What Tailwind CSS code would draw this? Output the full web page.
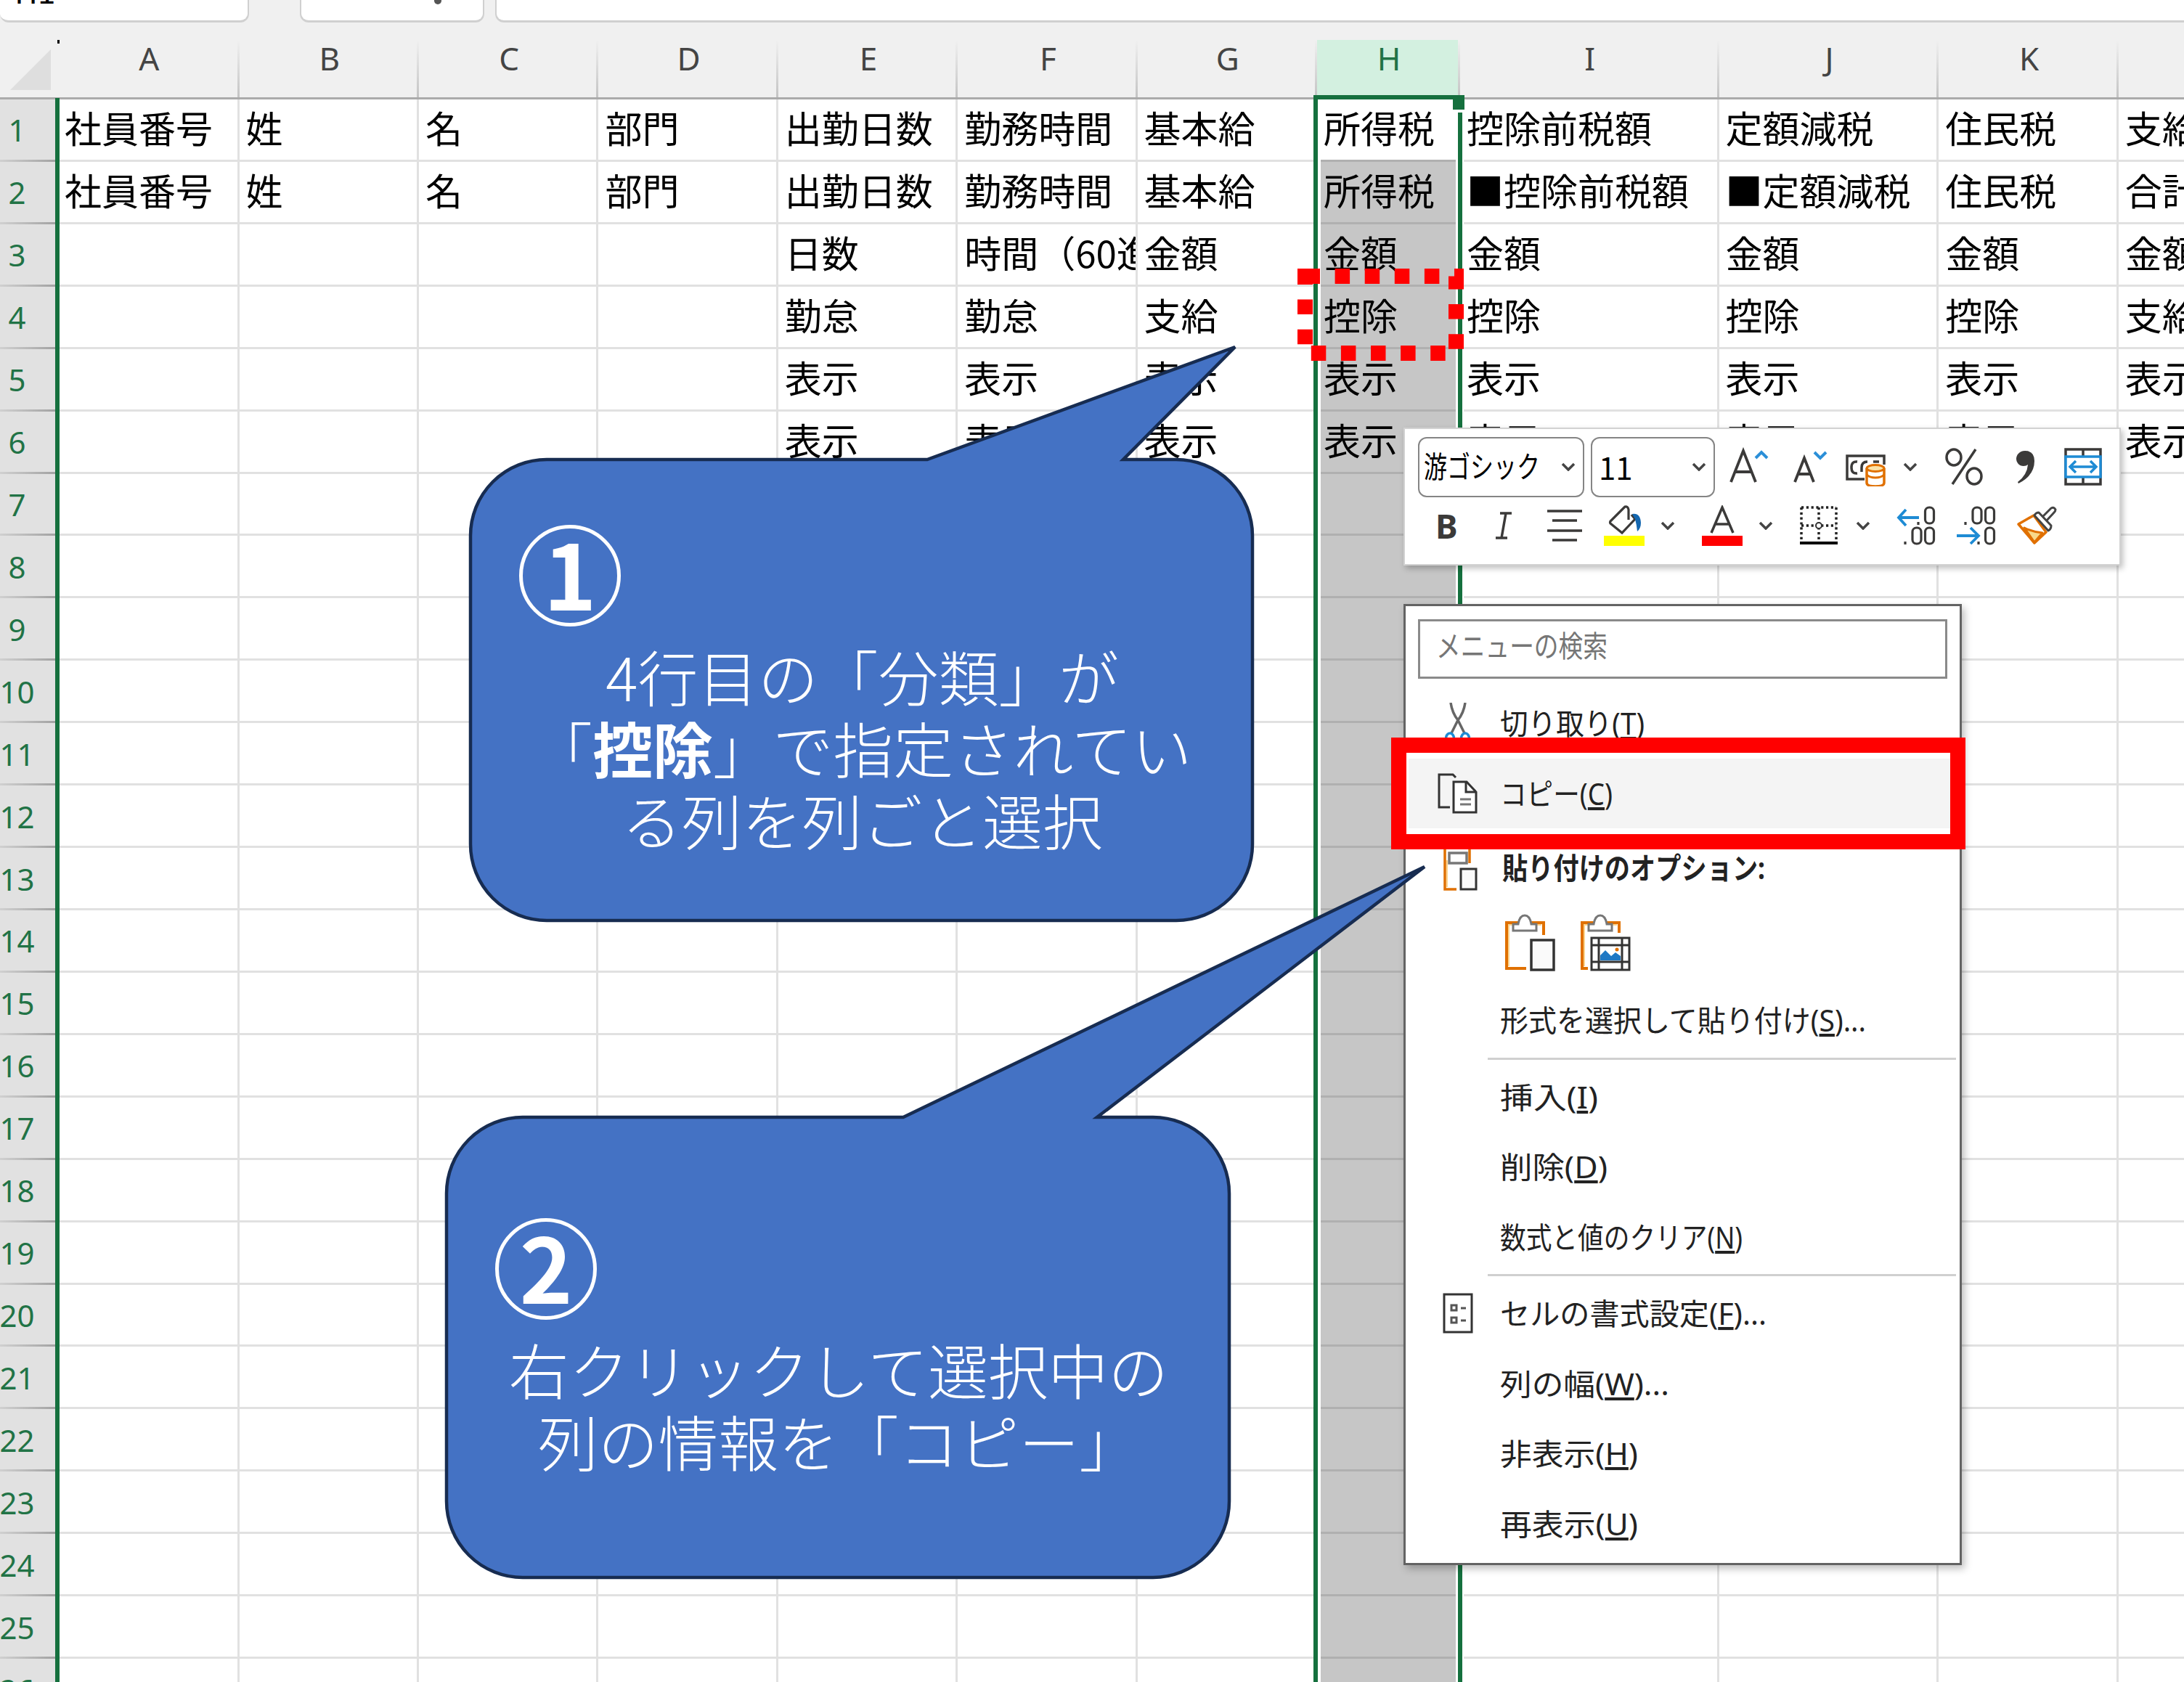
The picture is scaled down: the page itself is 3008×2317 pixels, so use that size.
<!DOCTYPE html>
<html lang="ja">
<head>
    <meta charset="UTF-8">
    <meta name="viewport" content="width=device-width, initial-scale=1.0">
    <title>列のコピー手順</title>
    <script src="https://cdn.jsdelivr.net/npm/@tailwindcss/browser@4"></script>
</head>
<body class="relative w-[3008px] h-[2317px] overflow-hidden bg-white text-black font-['Noto_Sans_CJK_JP',sans-serif]">

<!-- formula bar -->
<div class="flex h-[55px] items-start bg-[#f0f0f0]">
    <div class="w-[343px] h-[31px] bg-white border-r-2 border-b-3 border-[#d0d0d0] rounded-b-xl overflow-hidden">
        <div class="-mt-[41px] pl-[20px] text-[44px] leading-[54px]">H1</div>
    </div>
    <div class="ml-[70px] w-[254px] h-[31px] bg-white border-x-2 border-b-3 border-[#d0d0d0] rounded-b-xl overflow-hidden">
        <div class="ml-[183px] w-[10px] h-[6px] bg-[#555] rounded-b-full"></div>
    </div>
    <div class="ml-[15px] grow h-[31px] bg-white border-l-2 border-b-3 border-[#d0d0d0] rounded-bl-xl"></div>
</div>

<!-- column letters -->
<div id="columns" class="flex h-[82px] overflow-hidden bg-[#f0f0f0] border-b-3 border-[#ababab] font-['Noto_Sans',sans-serif] text-[44px] text-[#444]">
    <div class="flex w-[80px] shrink-0 pl-[14px] pt-[13px]">
        <svg width="56" height="56" viewBox="0 0 56 56"><path d="M56 0V56H0z" fill="#dedede"/></svg>
    </div>
</div>

<!-- rows -->
<div id="rows" class="overflow-hidden"></div>

<!-- selection frame -->
<div class="absolute left-[79px] top-[55px] w-[3px] h-[5px] bg-black"></div>
<div class="absolute left-[76px] top-[135px] w-[6px] bottom-0 bg-[#15703e]"></div>
<div class="absolute left-[1809px] top-[131px] w-[208px] h-[6px] bg-[#15703e]"></div>
<div class="absolute left-[1809px] top-[131px] w-[6px] bottom-0 bg-[#15703e]"></div>
<div class="absolute left-[1815px] top-[137px] w-[4px] bottom-0 bg-white"></div>
<div class="absolute left-[2005px] top-[137px] w-[11px] bottom-0 bg-white"></div>
<div class="absolute left-[2008px] top-[155px] w-[6px] bottom-0 bg-[#15703e]"></div>
<div class="absolute left-[2001px] top-[131px] w-[16px] h-[20px] bg-[#15703e]"></div>

<!-- mini toolbar -->
<div class="absolute left-[1933px] top-[589px] w-[988px] h-[190px] bg-white border-2 border-[#d2d2d2] shadow-[3px_4px_8px_rgba(0,0,0,0.25)] text-[#3b3a39]">
    <div class="flex items-center mt-[10px] ml-[18px] h-[84px]">
        <div class="flex items-center justify-between w-[229px] h-[83px] pl-[6px] pr-[10px] border-[2.5px] border-[#858585] rounded-xl">
            <svg class="overflow-visible" width="160" height="40" font-size="41" fill="#000"><text y="35" textLength="160" lengthAdjust="spacingAndGlyphs">游ゴシック</text></svg>
            <svg width="20" height="12" viewBox="0 0 20 12"><path d="M2 2l8 8 8-8" fill="none" stroke="#444" stroke-width="3.5"/></svg>
        </div>
        <div class="flex items-center justify-between ml-[9px] w-[171px] h-[83px] pl-[9px] pr-[10px] border-[2.5px] border-[#858585] rounded-xl">
            <span class="text-[42px] leading-none text-black">11</span>
            <svg width="20" height="12" viewBox="0 0 20 12"><path d="M2 2l8 8 8-8" fill="none" stroke="#444" stroke-width="3.5"/></svg>
        </div>
        <svg class="ml-[20px]" width="56" height="54" viewBox="0 0 56 54"><path d="M2 48L19 5l17 43M8 34h22" fill="none" stroke="#3b3a39" stroke-width="3.8"/><path d="M36 15l8-8 8 8" fill="none" stroke="#2b8fd8" stroke-width="4"/></svg>
        <svg class="ml-[32px]" width="52" height="54" viewBox="0 0 52 54"><path d="M2 48L15 15l13 33M7 37h17" fill="none" stroke="#3b3a39" stroke-width="3.8"/><path d="M29 7l8 8 8-8" fill="none" stroke="#2b8fd8" stroke-width="4"/></svg>
        <svg class="ml-[19px]" width="60" height="54" viewBox="0 0 60 54">
            <path d="M27 44H3V12h51v12" fill="none" stroke="#3b3a39" stroke-width="3.5"/>
            <path d="M17 20q-8-1-8 8t8 8M31 20q-8 0-8 8v6M39 20h8" fill="none" stroke="#3b3a39" stroke-width="3.5"/>
            <path d="M30 30v20q0 5 12 5t12-5V30" fill="#fff" stroke="#e07000" stroke-width="3.5" transform="translate(0 -1)"/>
            <ellipse cx="42" cy="29" rx="12" ry="4.5" fill="#fbe3a8" stroke="#e07000" stroke-width="3"/>
            <path d="M30 38q4 4 12 4t12-4" fill="none" stroke="#e07000" stroke-width="3"/>
        </svg>
        <svg class="ml-[20px]" width="20" height="12" viewBox="0 0 20 12"><path d="M2 2l8 8 8-8" fill="none" stroke="#444" stroke-width="3.5"/></svg>
        <svg class="ml-[37px]" width="54" height="54" viewBox="0 0 54 54" fill="none" stroke="#3b3a39" stroke-width="3.5"><path d="M43 3L11 51"/><ellipse cx="13" cy="14" rx="10" ry="11"/><ellipse cx="41" cy="40" rx="10" ry="11"/></svg>
        <svg class="ml-[44px]" width="28" height="54" viewBox="0 0 28 54"><path d="M13 5C5 5 1 11 1 16s4 10 10 10q4 0 6-2Q16 38 3 48l1 2Q26 39 26 19 26 5 13 5z" fill="#3b3a39"/></svg>
        <svg class="ml-[38px]" width="54" height="54" viewBox="0 0 54 54" fill="none" stroke-width="3.5"><path d="M3 3h48v48H3zM27 3v48" stroke="#3b3a39"/><path d="M3 13h48v28H3z" fill="#fff" stroke="#1e8bd4"/><path d="M10 27h34M17 19l-8 8 8 8M37 19l8 8-8 8" stroke="#1e8bd4"/></svg>
    </div>
    <div class="flex items-center mt-[11px] ml-[42px] h-[56px]">
        <span class="w-[30px] text-[46px] leading-[56px] font-bold font-['Noto_Sans',sans-serif]">B</span>
        <svg class="ml-[52px]" width="26" height="38" viewBox="0 0 26 38"><path d="M7 2h16M1 36h16M15 2L9 36" fill="none" stroke="#3b3a39" stroke-width="3.5"/></svg>
        <svg class="ml-[46px]" width="48" height="46" viewBox="0 0 48 46"><path d="M0 3h48M7 16h34M0 30h48M7 43h34" stroke="#3b3a39" stroke-width="3.5"/></svg>
        <svg class="ml-[30px]" width="56" height="56" viewBox="0 0 56 56"><path d="M34 20V6q-1-5-5-4l-3 3L9 22q-1 2 0 3l16 13L43 19l-5-6" fill="none" stroke="#3b3a39" stroke-width="3.2"/><path d="M39 12q11-2 12 12 0 8-5 12-1-10-3-17z" fill="#1467b0"/><path d="M0 42h56v14H0z" fill="#ff0"/></svg>
        <svg class="ml-[22px]" width="20" height="12" viewBox="0 0 20 12"><path d="M2 2l8 8 8-8" fill="none" stroke="#444" stroke-width="3.5"/></svg>
        <svg class="ml-[37px]" width="56" height="56" viewBox="0 0 56 56"><path d="M13 38L28 3l15 35M18 26h20" fill="none" stroke="#3b3a39" stroke-width="3.5"/><path d="M0 42h56v14H0z" fill="red"/></svg>
        <svg class="ml-[22px]" width="20" height="12" viewBox="0 0 20 12"><path d="M2 2l8 8 8-8" fill="none" stroke="#444" stroke-width="3.5"/></svg>
        <svg class="ml-[37px]" width="52" height="54" viewBox="0 0 52 54"><path d="M2 2h48M2 2v44M50 2v44M26 2v44M2 27h48" fill="none" stroke="#222" stroke-width="3.5" stroke-dasharray="3.2 3.6"/><path d="M0 51h52" stroke="#000" stroke-width="4"/><circle cx="26" cy="27" r="4" fill="#fff" stroke="#333" stroke-width="2"/></svg>
        <svg class="ml-[25px]" width="20" height="12" viewBox="0 0 20 12"><path d="M2 2l8 8 8-8" fill="none" stroke="#444" stroke-width="3.5"/></svg>
        <svg class="ml-[36px]" width="54" height="54" viewBox="0 0 54 54" fill="none" stroke="#3b3a39" stroke-width="3.2"><rect x="39.5" y="2" width="12" height="22" rx="5.5"/><rect x="22" y="30" width="12" height="22" rx="5.5"/><rect x="39.5" y="30" width="12" height="22" rx="5.5"/><path d="M30 22v4M12 49v4"/><path d="M31 16H3M13 5L3 16l10 11" stroke="#1e8bd4" stroke-width="3.8"/></svg>
        <svg class="ml-[29px]" width="54" height="54" viewBox="0 0 54 54" fill="none" stroke="#3b3a39" stroke-width="3.2"><rect x="22" y="2" width="12" height="22" rx="5.5"/><rect x="39.5" y="2" width="12" height="22" rx="5.5"/><rect x="39.5" y="30" width="12" height="22" rx="5.5"/><path d="M12 22v4M30 49v4"/><path d="M0 41h29M19 30l11 11-11 11" stroke="#1e8bd4" stroke-width="3.8"/></svg>
        <svg class="ml-[29px]" width="56" height="54" viewBox="0 0 56 54" stroke-linejoin="round"><path d="M2 25L23 13 40 36 24 51z" fill="#fff" stroke="#e07000" stroke-width="3.5"/><path d="M10 30q12 6 25 7L24 50z" fill="#f8d98a" stroke="#e07000" stroke-width="3"/><path d="M35 15L47 3q4-2 6 2 0 2-2 4L39 22z" fill="#fff" stroke="#444" stroke-width="3"/><path d="M24 13q2-4 6-4L47 27q0 5-4 7z" fill="#fff" stroke="#444" stroke-width="3"/></svg>
    </div>
</div>

<!-- context menu -->
<div class="absolute left-[1933px] top-[832px] w-[769px] h-[1324px] bg-white border-3 border-[#636363] shadow-[4px_5px_10px_rgba(0,0,0,0.25)] text-[41px] text-[#222] font-['Noto_Sans','Noto_Sans_CJK_JP',sans-serif]">
    <div class="flex items-center mt-[18px] mx-[17px] h-[82px] pl-[22px] pb-[10px] border-3 border-[#8a8a8a] text-[#767676]">
        <svg class="overflow-visible" width="236" height="40" fill="currentColor"><text y="36" textLength="236" lengthAdjust="spacingAndGlyphs">メニューの検索</text></svg>
    </div>
    <div class="flex items-center mt-[13px] h-[96.5px]">
        <div class="w-[130px] pl-[54px]">
            <svg width="36" height="56" viewBox="0 0 36 56" fill="none" stroke-width="3.5"><path d="M8 0q2 14 10 24l9 18M28 0q-2 14-10 24L9 42" stroke="#666"/><ellipse cx="7" cy="49" rx="5.5" ry="7" stroke="#1e8bd4"/><ellipse cx="28" cy="49" rx="5.5" ry="7" stroke="#1e8bd4"/></svg>
        </div>
        <svg class="overflow-visible" width="199" height="40" fill="currentColor"><text y="36" textLength="199" lengthAdjust="spacingAndGlyphs">切り取り(<tspan class="underline">T</tspan>)</text></svg>
    </div>
    <div class="flex items-center h-[96.5px] mx-[4px] bg-[#f4f4f4]">
        <div class="w-[126px] pl-[40px]">
            <svg width="56" height="56" viewBox="0 0 56 56" fill="none" stroke="#333" stroke-width="3"><path d="M17 47H2V2h19l4 4"/><path d="M22 12h18l13 14v28H22z" fill="#fff"/><path d="M39 12v14h14"/><path d="M31 36h15M31 43h15" stroke="#777"/></svg>
        </div>
        <svg class="overflow-visible" width="155" height="40" fill="currentColor"><text y="36" textLength="155" lengthAdjust="spacingAndGlyphs">コピー(<tspan class="underline">C</tspan>)</text></svg>
    </div>
    <div class="flex items-center h-[106px]">
        <div class="w-[133px] pl-[50px]">
            <svg width="50" height="78" viewBox="0 0 50 78" fill="none" stroke-width="3.5"><path d="M20 70H4V10h34v24" stroke="#e07000"/><path d="M7 67V30" stroke="#fbd48f" stroke-width="2"/><path d="M10 20h24v14H10z" fill="#fff" stroke="#777"/><path d="M26 42h21v28H26z" fill="#fafafa" stroke="#333" stroke-width="3"/></svg>
        </div>
        <svg class="overflow-visible" width="362" height="40" fill="currentColor" font-weight="bold"><text y="37" textLength="362" lengthAdjust="spacingAndGlyphs">貼り付けのオプション:</text></svg>
    </div>
    <div class="flex gap-[32px] h-[110px] pl-[135px] pt-[11px]">
        <svg width="72" height="82" viewBox="0 0 72 82" fill="none" stroke-width="4"><path d="M31 76H4V13h51v17" stroke="#e07000"/><path d="M7 73V16h45" stroke="#fbd48f" stroke-width="2"/><path d="M13 24V15h7q2-12 9-12t9 12h7v9z" fill="#fff" stroke="#777" stroke-width="3"/><path d="M38 37h31v41H38z" fill="#fafafa" stroke="#333" stroke-width="3.5"/></svg>
        <svg width="72" height="82" viewBox="0 0 72 82" fill="none" stroke-width="4"><path d="M12 76H4V13h51v14" stroke="#e07000"/><path d="M7 73V16h45" stroke="#fbd48f" stroke-width="2"/><path d="M13 24V15h7q2-12 9-12t9 12h7v9z" fill="#fff" stroke="#777" stroke-width="3"/><path d="M17 34h52v44H17zM27 34v44M59 34v44M17 44h52M17 67h52" fill="#fff" stroke="#333" stroke-width="3"/><path d="M29 65V58l7-7 8 8 6-5 7 5v6z" fill="#1e78c4"/><circle cx="52" cy="50" r="2.5" fill="#e07000"/></svg>
    </div>
    <div class="flex items-center h-[96.5px] pl-[130px]"><svg class="overflow-visible" width="504" height="40" fill="currentColor"><text y="36" textLength="504" lengthAdjust="spacingAndGlyphs">形式を選択して貼り付け(<tspan class="underline">S</tspan>)...</text></svg></div>
    <div class="h-[3px] my-[3px] ml-[113px] mr-[5px] bg-[#d0d0d0]"></div>
    <div class="flex items-center h-[96.5px] pl-[130px]"><svg class="overflow-visible" width="135" height="40" fill="currentColor"><text y="36" textLength="135" lengthAdjust="spacingAndGlyphs">挿入(<tspan class="underline">I</tspan>)</text></svg></div>
    <div class="flex items-center h-[96.5px] pl-[130px]"><svg class="overflow-visible" width="148" height="40" fill="currentColor"><text y="36" textLength="148" lengthAdjust="spacingAndGlyphs">削除(<tspan class="underline">D</tspan>)</text></svg></div>
    <div class="flex items-center h-[96.5px] pl-[130px]"><svg class="overflow-visible" width="334" height="40" fill="currentColor"><text y="36" textLength="334" lengthAdjust="spacingAndGlyphs">数式と値のクリア(<tspan class="underline">N</tspan>)</text></svg></div>
    <div class="h-[3px] my-[3px] ml-[113px] mr-[5px] bg-[#d0d0d0]"></div>
    <div class="flex items-center h-[96.5px]">
        <div class="w-[130px] pl-[51px]">
            <svg width="42" height="56" viewBox="0 0 42 56" fill="none" stroke="#333" stroke-width="3"><path d="M2 2h38v52H2z"/><path d="M12 17h7v7h-7zM12 34h7v7h-7zM25 21h7M25 38h7" stroke="#555"/></svg>
        </div>
        <svg class="overflow-visible" width="367" height="40" fill="currentColor"><text y="36" textLength="367" lengthAdjust="spacingAndGlyphs">セルの書式設定(<tspan class="underline">F</tspan>)...</text></svg>
    </div>
    <div class="flex items-center h-[96.5px] pl-[130px]"><svg class="overflow-visible" width="233" height="40" fill="currentColor"><text y="36" textLength="233" lengthAdjust="spacingAndGlyphs">列の幅(<tspan class="underline">W</tspan>)...</text></svg></div>
    <div class="flex items-center h-[96.5px] pl-[130px]"><svg class="overflow-visible" width="190" height="40" fill="currentColor"><text y="36" textLength="190" lengthAdjust="spacingAndGlyphs">非表示(<tspan class="underline">H</tspan>)</text></svg></div>
    <div class="flex items-center h-[96.5px] pl-[130px]"><svg class="overflow-visible" width="190" height="40" fill="currentColor"><text y="36" textLength="190" lengthAdjust="spacingAndGlyphs">再表示(<tspan class="underline">U</tspan>)</text></svg></div>
</div>

<!-- red markers and callout shapes -->
<svg class="absolute left-0 top-0" width="3008" height="2317" viewBox="0 0 3008 2317" fill="none">
    <path d="M1797.5 380.5H2005.5V486.5H1797.5z" stroke="red" stroke-width="21" stroke-dasharray="20.5 20.6"/>
    <path d="M753 633H1277L1701 478 1547 633H1620A105 105 0 0 1 1725 738V1163A105 105 0 0 1 1620 1268H753A105 105 0 0 1 648 1163V738A105 105 0 0 1 753 633z" fill="#4472c4" stroke="#172c51" stroke-width="4.5"/>
    <path d="M720 1539H1244L1962 1194 1511 1539H1588A105 105 0 0 1 1693 1644V2068A105 105 0 0 1 1588 2173H720A105 105 0 0 1 615 2068V1644A105 105 0 0 1 720 1539z" fill="#4472c4" stroke="#172c51" stroke-width="4.5"/>
</svg>
<div class="absolute left-[1916px] top-[1016px] w-[791px] h-[154px] border-[21px] border-[#f00]"></div>

<!-- callout texts -->
<div class="absolute left-[648px] top-[633px] w-[1077px] h-[635px] pt-[90px] text-white font-light">
    <div class="flex items-center justify-center ml-[67px] w-[140px] h-[140px] border-[5px] rounded-full text-[124px] leading-none font-bold"><span class="-mt-[12px]">1</span></div>
    <p class="mt-[18px] pl-[2px] text-center text-[82.8px] leading-[99px] whitespace-nowrap">4行目の「分類」が<br>「<b class="font-bold">控除</b>」で指定されてい<br>る列を列ごと選択</p>
</div>
<div class="absolute left-[615px] top-[1539px] w-[1078px] h-[634px] pt-[139px] text-white font-light">
    <div class="flex items-center justify-center ml-[67px] w-[140px] h-[140px] border-[5px] rounded-full text-[124px] leading-none font-bold"><span class="-mt-[12px]">2</span></div>
    <p class="mt-[18px] pl-[2px] text-center text-[82.8px] leading-[99px] whitespace-nowrap">右クリックして選択中の<br>列の情報を「コピー」</p>
</div>

<script>
    const columns = [
        ['A', 249.6, ['社員番号', '社員番号']],
        ['B', 247.4, ['姓', '姓']],
        ['C', 247.4, ['名', '名']],
        ['D', 247.4, ['部門', '部門']],
        ['E', 247.4, ['出勤日数', '出勤日数', '日数', '勤怠', '表示', '表示']],
        ['F', 247.4, ['勤務時間', '勤務時間', '時間（60進', '勤怠', '表示', '表示']],
        ['G', 247.4, ['基本給', '基本給', '金額', '支給', '表示', '表示']],
        ['H', 197, ['所得税', '所得税', '金額', '控除', '表示', '表示']],
        ['I', 356.6, ['控除前税額', '■控除前税額', '金額', '控除', '表示', '表示']],
        ['J', 302.8, ['定額減税', '■定額減税', '金額', '控除', '表示', '表示']],
        ['K', 247.5, ['住民税', '住民税', '金額', '控除', '表示', '表示']],
        ['', 95, ['支給', '合計', '金額', '支給', '表示', '表示']],
    ];

    const header = document.getElementById('columns');
    for (const [name, width] of columns) {
        const cell = document.createElement('div');
        cell.className = 'flex shrink-0 h-full';
        cell.style.width = width + 'px';
        const tone = name === 'H' ? 'bg-[#d3f0e0] text-[#217346]' : '';
        cell.innerHTML = `<div class="grow pl-[4px] text-center leading-[50px] ${tone}">${name}</div><div class="w-[3px] bg-linear-to-b from-[#f0f0f0] to-[#c4c4c4]"></div>`;
        header.appendChild(cell);
    }

    const rows = document.getElementById('rows');
    for (let r = 0; r < 26; r++) {
        const row = document.createElement('div');
        row.className = 'flex h-[85.93px]';
        let html = `<div class="flex flex-col w-[80px] shrink-0 bg-[#e1e1e1]">
            <div class="grow flex items-center pt-[2px] pr-[33px] justify-center text-[42px] leading-none text-[#217346] font-['Noto_Sans',sans-serif]">${r + 1}</div>
            <div class="h-[3px] bg-linear-to-r from-[#d0d0d0] to-[#a0a0a0]"></div></div>`;
        for (const [name, width, cells] of columns) {
            const fill = name !== 'H' ? 'border-[#e1e1e1]' : r ? 'bg-[#c6c6c6] border-[#b0b0b0]' : 'border-[#b0b0b0]';
            html += `<div class="shrink-0 overflow-hidden pl-[9px] border-r-3 border-b-3 text-[51px] leading-[77px] whitespace-nowrap ${fill}" style="width:${width}px">${cells[r] || ''}</div>`;
        }
        row.innerHTML = html;
        rows.appendChild(row);
    }
</script>

</body>
</html>
